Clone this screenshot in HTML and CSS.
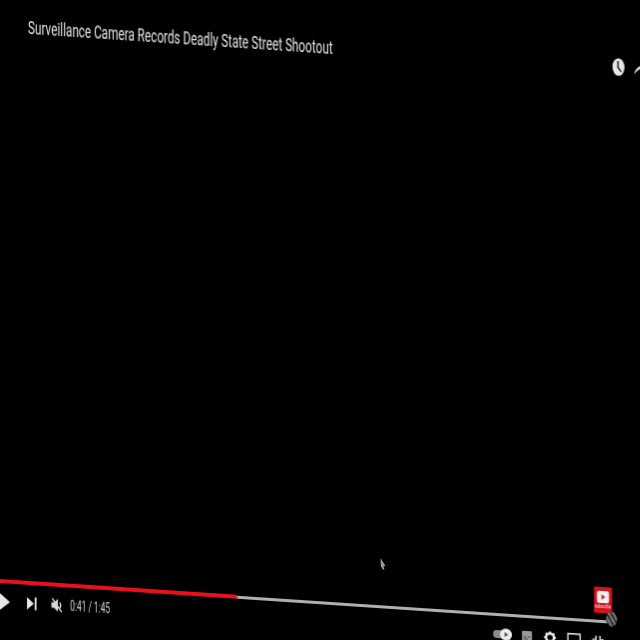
FILE: index.html
```html
<!DOCTYPE html>
<html lang="en">
<head>
<meta charset="utf-8">
<title>Surveillance Camera Records Deadly State Street Shootout</title>
<link rel="stylesheet" href="styles.css">
</head>
<body>
<main class="stage">
  <div class="player">
    <header class="top-row">
      <span class="title">Surveillance Camera Records Deadly State Street Shootout</span>
      <div class="top-icons">
        <svg class="clock" viewBox="0 0 14 20"><ellipse cx="7" cy="10" rx="6.5" ry="9.5" fill="#e6e6e6"/><path d="M6.5 3.5V10.5L10 15" fill="none" stroke="#1a1a1a" stroke-width="1.6"/></svg>
        <svg class="share" viewBox="0 0 12 16"><path d="M0 15C1 9 4 6 8 5V1L12 7V12L8 8C5 8.500 2 11 0 15Z" fill="#e6e6e6"/></svg>
      </div>
    </header>
    <div class="spacer"></div>
    <div class="progress">
      <div class="played"></div>
      <div class="remaining"></div>
      <div class="badge">
        <div class="badge-icon"><svg viewBox="0 0 10 10"><path d="M3 1.500L8 5L3 8.500Z" fill="#d8202a"/></svg></div>
        <span class="badge-text">subscribe</span>
      </div>
      <div class="thumb"></div>
    </div>
    <div class="controls">
      <div class="left-controls">
        <svg class="play" viewBox="0 0 11 18"><path d="M0 0L11 9L0 18Z" fill="#e8e8e8"/></svg>
        <svg class="next" viewBox="0 0 11 14"><path d="M0 0L7.500 7L0 14Z" fill="#e8e8e8"/><rect x="8.500" y="0" width="2" height="14" fill="#e8e8e8"/></svg>
        <svg class="mute" viewBox="0 0 12 16"><path d="M0 5H3L7 1V15L3 11H0Z" fill="#d8d8d8"/><path d="M1 1L11 15" stroke="#d8d8d8" stroke-width="1.500"/><path d="M9 5Q11 8 9 11" fill="none" stroke="#d8d8d8" stroke-width="1.300"/></svg>
        <span class="time">0:41 / 1:45</span>
      </div>
      <div class="right-controls">
        <svg class="toggle" viewBox="0 0 20 14"><rect x="0" y="3" width="14" height="8" rx="4" fill="#8a8a8a"/><circle cx="13" cy="7" r="6" fill="#eee"/><path d="M11.500 4.500L15.500 7L11.500 9.500Z" fill="#555"/></svg>
        <svg class="subs" viewBox="0 0 12 12"><rect width="12" height="12" rx="1.500" fill="#9a9a9a"/><path d="M2 7H5M7 7H10M2 9.500H7" stroke="#333" stroke-width="1"/></svg>
        <svg class="gear" viewBox="0 0 12 12"><circle cx="6" cy="6" r="4" fill="none" stroke="#eee" stroke-width="2.400"/><path d="M6 0V2M6 10V12M0 6H2M10 6H12M1.800 1.800L3 3M9 9L10.200 10.200M10.200 1.800L9 3M3 9L1.800 10.200" stroke="#eee" stroke-width="2"/></svg>
        <svg class="mini" viewBox="0 0 14 12"><rect x="0.800" y="0.800" width="12.400" height="10.400" fill="none" stroke="#eee" stroke-width="1.500"/></svg>
        <svg class="full" viewBox="0 0 12 12"><path d="M4 1V5H0M8 1V5H12M4 12V8H0M8 12V8H12" fill="none" stroke="#ddd" stroke-width="1.500"/></svg>
      </div>
    </div>
  </div>
  <svg class="cursor" viewBox="0 0 6 12"><path d="M0.500 0L5.500 8L3.500 8.500L4.500 12L2.500 11L0.800 8Z" fill="#9a9a9a"/></svg>
</main>
</body>
</html>
```

FILE: styles.css
```css
html, body {
  margin: 0;
  padding: 0;
  background: #000;
}

.stage {
  position: relative;
  width: 640px;
  height: 640px;
  overflow: hidden;
  background: #000;
  font-family: Roboto, "Liberation Sans", sans-serif;
}

.player {
  display: flex;
  flex-direction: column;
  width: 640px;
  height: 640px;
  transform: skewY(3.8deg);
  transform-origin: 0 0;
  filter: blur(0.6px);
}

.top-row {
  display: flex;
  justify-content: space-between;
  align-items: center;
  height: 30px;
  margin-top: 11px;
  padding-left: 28px;
}

.title {
  padding-bottom: 1px;
  font-size: 18px;
  line-height: 24px;
  color: #e2e2e2;
  white-space: nowrap;
  transform: scaleX(0.651);
  transform-origin: 0 50%;
}

.top-icons {
  display: flex;
  align-items: center;
  gap: 9px;
  width: 29px;
  flex: none;
  margin-right: -1px;
}

.clock { width: 13px; height: 20px; flex: none; }
.share { width: 12px; height: 16px; flex: none; }

.spacer { flex: 1; }

.progress {
  position: relative;
  display: flex;
  align-items: center;
  width: 610px;
  height: 4px;
  flex: none;
}

.played { width: 237px; height: 4px; background: #e8101c; }
.remaining { flex: 1; height: 3px; background: #b0b0b0; }

.badge {
  position: absolute;
  right: -2px;
  bottom: 10px;
  display: flex;
  flex-direction: column;
  align-items: center;
  width: 18px;
  height: 26px;
  padding-top: 4px;
  box-sizing: border-box;
  background: #d3141f;
}

.badge-icon {
  display: flex;
  align-items: center;
  justify-content: center;
  width: 12px;
  height: 12px;
  border-radius: 2px;
  background: #eee;
}

.badge-icon svg { width: 8px; height: 8px; }

.badge-text {
  font-size: 5px;
  line-height: 7px;
  color: #eee;
  transform: scaleX(0.75);
  white-space: nowrap;
}

.thumb {
  position: absolute;
  right: -7px;
  top: -8px;
  width: 11px;
  height: 15px;
  border-radius: 50%;
  background: repeating-linear-gradient(60deg, #777 0 2px, #333 2px 4px);
}

.controls {
  display: flex;
  justify-content: space-between;
  align-items: center;
  height: 30px;
  margin-top: 3px;
  margin-bottom: 24px;
  flex: none;
}

.left-controls,
.right-controls {
  display: flex;
  align-items: center;
}

.play { width: 10px; height: 17px; flex: none; }
.next { width: 10px; height: 13px; flex: none; margin-left: 17px; }
.mute { width: 12px; height: 15px; flex: none; margin-left: 14px; }

.time {
  margin-left: 7px;
  font-size: 14px;
  line-height: 16px;
  color: #d0d0d0;
  white-space: nowrap;
  transform: scaleX(0.6);
  transform-origin: 0 50%;
}

.right-controls {
  gap: 11px;
  padding-right: 36px;
}

.toggle { width: 20px; height: 14px; flex: none; margin-right: -3px; }
.subs { width: 12px; height: 10px; flex: none; }
.gear { width: 12px; height: 12px; flex: none; }
.mini { width: 14px; height: 12px; flex: none; }
.full { width: 12px; height: 12px; flex: none; }

.cursor {
  position: absolute;
  left: 380px;
  top: 558px;
  width: 6px;
  height: 12px;
  filter: blur(0.4px);
}
```
